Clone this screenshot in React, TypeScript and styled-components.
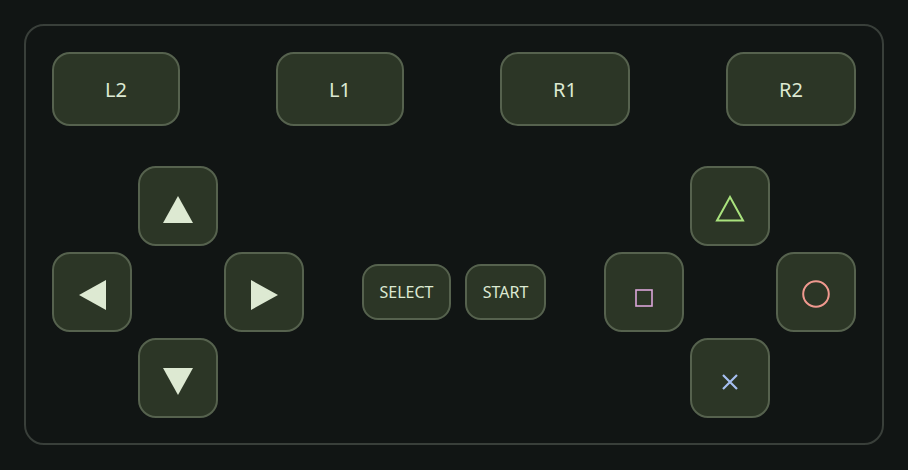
import styled, { createGlobalStyle } from 'styled-components'

const GlobalStyle = createGlobalStyle`
  html, body {
    margin: 0;
    padding: 0;
    background: #111514;
  }
  body {
    font-family: 'Noto Sans', 'Open Sans', sans-serif;
  }
`

const Page = styled.div`
  width: 908px;
  height: 470px;
  padding: 24px;
  box-sizing: border-box;
`

const Pad = styled.div`
  height: 421px;
  border: 2px solid #393f3a;
  border-radius: 20px;
  box-sizing: border-box;
  padding: 26px;
  display: flex;
  flex-direction: column;
  gap: 40px;
`

const ShoulderRow = styled.div`
  display: flex;
  justify-content: space-between;
`

const Key = styled.button`
  display: flex;
  align-items: center;
  justify-content: center;
  box-sizing: border-box;
  background: #2c3626;
  border: 2px solid #56624e;
  color: #dde9d2;
  font-family: inherit;
  padding: 0;
  cursor: pointer;
`

const ShoulderKey = styled(Key)`
  height: 74px;
  padding: 0 51px;
  border-radius: 18px;
  font-size: 20px;
`

const MainRow = styled.div`
  display: flex;
  justify-content: space-between;
  align-items: center;
`

const Cluster = styled.div`
  display: grid;
  grid-template-columns: repeat(3, 80px);
  grid-template-rows: repeat(3, 80px);
  gap: 6px;
`

const PadKey = styled(Key)<{ $col: number; $row: number }>`
  grid-column: ${(p) => p.$col};
  grid-row: ${(p) => p.$row};
  width: 80px;
  height: 80px;
  border-radius: 18px;
`

const Center = styled.div`
  display: flex;
  gap: 14px;
`

const SmallKey = styled(Key)<{ $w: number }>`
  width: ${(p) => p.$w}px;
  height: 56px;
  border-radius: 16px;
  font-size: 16px;
`

const Glyph = styled.svg<{ $dy?: number }>`
  display: block;
  transform: translateY(${(p) => p.$dy ?? 0}px);
`

const ARROW = '#dde9d2'

const dpad = [
  { col: 2, row: 1, label: 'up', pts: '15,0 30,27 0,27', w: 30, h: 27 },
  { col: 1, row: 2, label: 'left', pts: '0,15 27,0 27,30', w: 27, h: 30 },
  { col: 3, row: 2, label: 'right', pts: '0,0 27,15 0,30', w: 27, h: 30 },
  { col: 2, row: 3, label: 'down', pts: '0,0 30,0 15,27', w: 30, h: 27 },
]

export default function App() {
  return (
    <Page>
      <GlobalStyle />
      <Pad>
        <ShoulderRow>
          {['L2', 'L1', 'R1', 'R2'].map((k) => (
            <ShoulderKey key={k}>{k}</ShoulderKey>
          ))}
        </ShoulderRow>
        <MainRow>
          <Cluster>
            {dpad.map((d) => (
              <PadKey key={d.label} $col={d.col} $row={d.row} aria-label={d.label}>
                <Glyph width={d.w} height={d.h} viewBox={`0 0 ${d.w} ${d.h}`} $dy={3}>
                  <polygon points={d.pts} fill={ARROW} />
                </Glyph>
              </PadKey>
            ))}
          </Cluster>
          <Center>
            <SmallKey $w={89}>SELECT</SmallKey>
            <SmallKey $w={81}>START</SmallKey>
          </Center>
          <Cluster>
            <PadKey $col={2} $row={1} aria-label="triangle">
              <Glyph width={30} height={27} viewBox="0 0 30 27" $dy={2}>
                <polygon points="15,2 28,25.5 2,25.5" fill="none" stroke="#a9e27d" strokeWidth={2} />
              </Glyph>
            </PadKey>
            <PadKey $col={1} $row={2} aria-label="square">
              <Glyph width={18} height={18} viewBox="0 0 18 18" $dy={6}>
                <rect x={1} y={1} width={16} height={16} fill="none" stroke="#dba6d9" strokeWidth={1.6} />
              </Glyph>
            </PadKey>
            <PadKey $col={3} $row={2} aria-label="circle">
              <Glyph width={28} height={28} viewBox="0 0 28 28" $dy={2}>
                <circle cx={14} cy={14} r={12.8} fill="none" stroke="#f0998f" strokeWidth={2} />
              </Glyph>
            </PadKey>
            <PadKey $col={2} $row={3} aria-label="cross">
              <Glyph width={18} height={18} viewBox="0 0 18 18" $dy={4}>
                <path d="M2 2 L16 16 M16 2 L2 16" stroke="#a6bff0" strokeWidth={2.2} />
              </Glyph>
            </PadKey>
          </Cluster>
        </MainRow>
      </Pad>
    </Page>
  )
}
